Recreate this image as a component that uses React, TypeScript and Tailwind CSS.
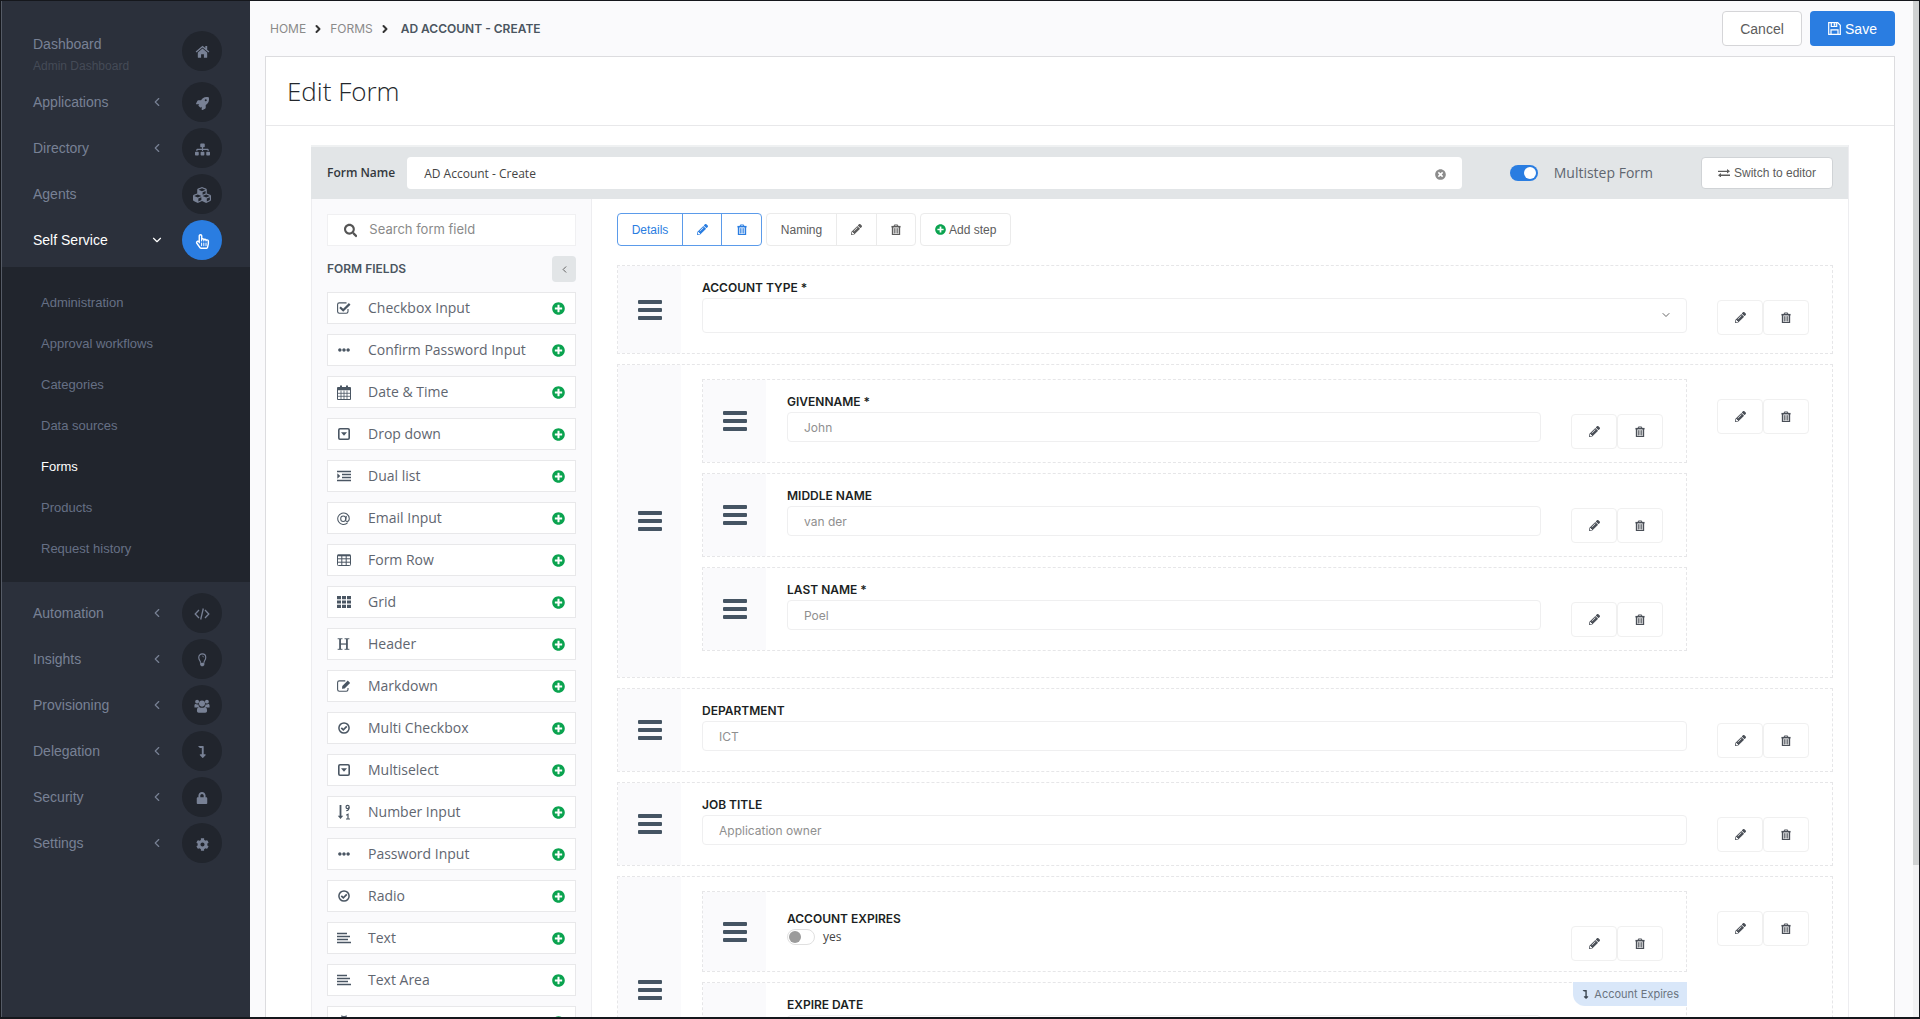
import React from "react";
import { ChevronDown, ChevronLeft, ChevronRight } from "lucide-react";
import {
  FaCog,
  FaCubes,
  FaEllipsisH,
  FaLevelDownAlt,
  FaLock,
  FaPencilAlt,
  FaPlusCircle,
  FaRegHandPointer,
  FaRocket,
  FaSearch,
  FaSitemap,
  FaTimesCircle,
} from "react-icons/fa";

type IconProps = { className?: string };

const HomeIcon = ({ className }: IconProps) => (
  <svg viewBox="0 0 16 14" className={className} fill="currentColor">
    <path d="M8 3.700 3 8v5c0 .4.300.7.700.7H6.500V9.800h3v3.900h2.800c.4 0 .7-.3.7-.7V8z" />
    <path d="M8 .8.700 7l.9 1L8 2.600 14.400 8l.9-1-2.300-2V1h-2v2.300z" />
  </svg>
);

const TrashIcon = ({ className }: IconProps) => (
  <svg viewBox="0 0 12 14" className={className} fill="none" stroke="currentColor">
    <path d="M.5 3.200h11" strokeWidth="1.800" />
    <path d="M4 3V1.200h4V3" strokeWidth="1.200" />
    <path d="M1.900 3.500v9.300h8.200V3.500" strokeWidth="1.800" />
    <path d="M4.300 5v6.500M6 5v6.500M7.700 5v6.500" strokeWidth="1" />
  </svg>
);

const CodeIcon = ({ className }: IconProps) => (
  <svg viewBox="0 0 16 14" className={className} fill="none" stroke="currentColor" strokeWidth="1.300">
    <path d="M5 3 1.200 7 5 11M11 3l3.800 4-3.800 4M9.300 1.500 6.700 12.500" />
  </svg>
);

const BulbIcon = ({ className }: IconProps) => (
  <svg viewBox="0 0 12 16" className={className} fill="none" stroke="currentColor" strokeWidth="1.300">
    <path d="M4 11C4 9 2 8 2 5a4 4 0 0 1 8 0c0 3-2 4-2 6" />
    <path d="M6 3.500c1 0 1.700.5 1.700 1.500" strokeWidth="0.800" />
    <path d="M3.600 11.200h4.800v2.500L7 15.200H5l-1.400-1.500z" fill="currentColor" stroke="none" />
  </svg>
);

const GroupIcon = ({ className }: IconProps) => (
  <svg viewBox="0 0 18 16" className={className} fill="currentColor">
    <circle cx="3.500" cy="3" r="2.200" />
    <circle cx="14.500" cy="3" r="2.200" />
    <circle cx="9" cy="5.200" r="3.400" />
    <path d="M.5 9.500V7.300c0-1 .6-1.600 1.400-1.600.8.500 2 .6 3 .2.100 1.300.6 2.100 1.200 2.800-1.200 0-2 .3-2.600.8zM17.500 9.500V7.300c0-1-.6-1.600-1.400-1.600-.8.500-2 .6-3 .2-.1 1.300-.6 2.100-1.200 2.800 1.200 0 2 .3 2.600.8z" />
    <path d="M3.300 13.300c0-2.700.8-4.400 2.500-4.400 2 1.300 4.400 1.300 6.400 0 1.700 0 2.500 1.700 2.500 4.400 0 1.500-.8 2.200-2 2.200H5.300c-1.200 0-2-.7-2-2.200z" />
  </svg>
);

const CheckSquareIcon = ({ className }: IconProps) => (
  <svg viewBox="0 0 14 12" className={className} fill="none" stroke="currentColor">
    <path d="M11 7v2.600c0 1-.7 1.700-1.700 1.700h-7c-1 0-1.700-.7-1.700-1.700v-7c0-1 .7-1.700 1.700-1.700h7.200" strokeWidth="1.100" />
    <path d="M3 5.200 6.200 8.200 12.700 1.900" strokeWidth="2.200" />
  </svg>
);

const EditIcon = ({ className }: IconProps) => (
  <svg viewBox="0 0 14 12" className={className} fill="none" stroke="currentColor">
    <path d="M11 8v1.600c0 1-.7 1.700-1.700 1.700h-7c-1 0-1.700-.7-1.700-1.700v-7c0-1 .7-1.700 1.700-1.700h6" strokeWidth="1.100" />
    <path d="m5 8.700.3-2.600L10.800.6l2.300 2.300-5.500 5.500z" fill="currentColor" stroke="none" />
  </svg>
);

const CalendarIcon = ({ className }: IconProps) => (
  <svg viewBox="0 0 14 15" className={className} fill="none" stroke="currentColor">
    <path d="M.5 2.500h13v12H.5z" />
    <path d="M.5 4h13" strokeWidth="2.500" />
    <path d="M4 .5v3M10 .5v3" strokeWidth="2" />
    <path d="M4 5.500v9M7 5.500v9M10 5.500v9M.5 8.300h13M.5 11.300h13" strokeWidth="0.800" />
  </svg>
);

const CaretSquareIcon = ({ className }: IconProps) => (
  <svg viewBox="0 0 12 12" className={className} fill="none" stroke="currentColor" strokeWidth="1.600">
    <rect x=".8" y=".8" width="10.400" height="10.400" rx="1.200" />
    <path d="M3 4.200h6L6 7.800z" fill="currentColor" stroke="none" />
  </svg>
);

const IndentIcon = ({ className }: IconProps) => (
  <svg viewBox="0 0 14 12" className={className} fill="none" stroke="currentColor" strokeWidth="1.700">
    <path d="M0 1.500h14M5 4.500h9M5 7.500h9M0 10.500h14" />
    <path d="M.3 3.300 3.300 6l-3 2.700z" fill="currentColor" stroke="none" />
  </svg>
);

const AlignLeftIcon = ({ className }: IconProps) => (
  <svg viewBox="0 0 14 12" className={className} fill="none" stroke="currentColor" strokeWidth="1.700">
    <path d="M0 1.500h10M0 4.500h13M0 7.500h11M0 10.500h14" />
  </svg>
);

const AtIcon = ({ className }: IconProps) => (
  <svg viewBox="0 0 14 14" className={className} fill="none" stroke="currentColor" strokeWidth="1.100">
    <path d="M11.500 11.500A6.200 6.200 0 1 1 13.200 7c0 2-1 3.200-2.300 3.200-1.200 0-1.700-.8-1.400-2.200l.6-3.800" />
    <ellipse cx="6.700" cy="7.200" rx="2.700" ry="3" />
  </svg>
);

const TableIcon = ({ className }: IconProps) => (
  <svg viewBox="0 0 14 12" className={className} fill="none" stroke="currentColor">
    <rect x=".5" y="1" width="13" height="10.500" rx=".8" />
    <path d="M.5 1.400h13" strokeWidth="1.800" />
    <path d="M4.800 1v10.500M9.200 1v10.500M.5 4.800h13M.5 8.200h13" />
  </svg>
);

const GridIcon = ({ className }: IconProps) => (
  <svg viewBox="0 0 14 12" className={className} fill="currentColor">
    <path d="M0 0h4v3.200H0zM5 0h4v3.200H5zM10 0h4v3.200h-4zM0 4.400h4v3.200H0zM5 4.400h4v3.200H5zM10 4.400h4v3.200h-4zM0 8.800h4V12H0zM5 8.800h4V12H5zM10 8.800h4V12h-4z" />
  </svg>
);

const HeaderIcon = ({ className }: IconProps) => (
  <svg viewBox="0 0 14 13" className={className} fill="none" stroke="currentColor">
    <path d="M3.300 1v11M10.700 1v11" strokeWidth="1.900" />
    <path d="M3 6.500h8" strokeWidth="1.300" />
    <path d="M.7.800h5.200M8.100.800h5.200M.7 12.200h5.200M8.100 12.200h5.200" />
  </svg>
);

const CheckCircleIcon = ({ className }: IconProps) => (
  <svg viewBox="0 0 12 12" className={className} fill="none" stroke="currentColor">
    <circle cx="6" cy="6" r="5.100" strokeWidth="1.500" />
    <path d="m3.300 5.900 2 2 3.500-3.500" strokeWidth="1.700" />
  </svg>
);

const SortNumericIcon = ({ className }: IconProps) => (
  <svg viewBox="0 0 14 16" className={className} fill="none" stroke="currentColor">
    <path d="M3.500 1v12" strokeWidth="1.800" />
    <path d="M.8 11.800h5.400L3.500 15z" fill="currentColor" stroke="none" />
    <path d="M12 3.300c0 2-.7 3.400-2.700 3.400M9 15h4M9.200 11.200l1.800-1V15" strokeWidth="1.200" />
    <circle cx="10.600" cy="3" r="1.600" strokeWidth="1.200" />
  </svg>
);

const TextCursorIcon = ({ className }: IconProps) => (
  <svg viewBox="0 0 14 14" className={className} fill="none" stroke="currentColor" strokeWidth="1.200">
    <path d="M4 1c2 0 3 .5 3 2 0-1.500 1-2 3-2M7 3v8M4 13c2 0 3-.5 3-2 0 1.500 1 2 3 2M5 7h4" />
  </svg>
);

const FloppyIcon = ({ className }: IconProps) => (
  <svg viewBox="0 0 13 13" className={className} fill="none" stroke="currentColor" strokeWidth="1.200">
    <path d="M.7.700h9l2.600 2.600v9H.7z" />
    <path d="M3.300.7v3.800h5.400V.7M3 12V7.800h7V12" />
    <path d="M6.500 1.200v2.600" strokeWidth="1.600" />
  </svg>
);

const ExchangeIcon = ({ className }: IconProps) => (
  <svg viewBox="0 0 14 10" className={className} fill="none" stroke="currentColor" strokeWidth="1.500">
    <path d="M0 2.700h11M3 7.300h11" />
    <path d="M10.500 0 14 2.700l-3.500 2.500zM3.500 4.800 0 7.300 3.500 10z" fill="currentColor" stroke="none" />
  </svg>
);

const BarsIcon = ({ className }: IconProps) => (
  <svg viewBox="0 0 24 20" className={className} fill="currentColor">
    <rect width="24" height="4" rx="1" />
    <rect y="8" width="24" height="4" rx="1" />
    <rect y="16" width="24" height="4" rx="1" />
  </svg>
);

type MenuEntry = {
  label: string;
  icon: React.ReactNode;
  sub?: string;
  arrow?: boolean;
  active?: boolean;
};

const topMenu: MenuEntry[] = [
  { label: "Dashboard", sub: "Admin Dashboard", icon: <HomeIcon className="w-[15px]" /> },
  { label: "Applications", arrow: true, icon: <FaRocket className="size-[13px]" /> },
  { label: "Directory", arrow: true, icon: <FaSitemap className="size-[15px]" /> },
  { label: "Agents", icon: <FaCubes className="size-[18px]" /> },
  { label: "Self Service", arrow: true, active: true, icon: <FaRegHandPointer className="size-[15px]" /> },
];

const bottomMenu: MenuEntry[] = [
  { label: "Automation", arrow: true, icon: <CodeIcon className="w-4" /> },
  { label: "Insights", arrow: true, icon: <BulbIcon className="h-[14px]" /> },
  { label: "Provisioning", arrow: true, icon: <GroupIcon className="w-4" /> },
  { label: "Delegation", arrow: true, icon: <FaLevelDownAlt className="size-3" /> },
  { label: "Security", arrow: true, icon: <FaLock className="size-3" /> },
  { label: "Settings", arrow: true, icon: <FaCog className="size-[13px]" /> },
];

const subMenu = [
  "Administration",
  "Approval workflows",
  "Categories",
  "Data sources",
  "Forms",
  "Products",
  "Request history",
];

const formFields = [
  { label: "Checkbox Input", icon: <CheckSquareIcon className="w-[14px]" /> },
  { label: "Confirm Password Input", icon: <FaEllipsisH className="size-3" /> },
  { label: "Date & Time", icon: <CalendarIcon className="w-[14px]" /> },
  { label: "Drop down", icon: <CaretSquareIcon className="w-3" /> },
  { label: "Dual list", icon: <IndentIcon className="w-[14px]" /> },
  { label: "Email Input", icon: <AtIcon className="w-[13px]" /> },
  { label: "Form Row", icon: <TableIcon className="w-[14px]" /> },
  { label: "Grid", icon: <GridIcon className="w-[14px]" /> },
  { label: "Header", icon: <HeaderIcon className="w-[13px]" /> },
  { label: "Markdown", icon: <EditIcon className="w-[14px]" /> },
  { label: "Multi Checkbox", icon: <CheckCircleIcon className="w-3" /> },
  { label: "Multiselect", icon: <CaretSquareIcon className="w-3" /> },
  { label: "Number Input", icon: <SortNumericIcon className="w-[14px]" /> },
  { label: "Password Input", icon: <FaEllipsisH className="size-3" /> },
  { label: "Radio", icon: <CheckCircleIcon className="w-3" /> },
  { label: "Text", icon: <AlignLeftIcon className="w-[14px]" /> },
  { label: "Text Area", icon: <AlignLeftIcon className="w-[14px]" /> },
  { label: "Text Input", icon: <TextCursorIcon className="w-[14px]" /> },
];

const MenuItem = ({ label, icon, sub, arrow, active }: MenuEntry) => (
  <li>
    <a
      href="#"
      className={`flex items-center pl-[31px] pr-7 ${sub ? "h-14" : "h-[46px]"} ${
        active ? "text-white" : "text-[#788195]"
      }`}
    >
      <span className={`flex-1 text-sm leading-5 ${sub ? "pt-[9px]" : ""}`}>
        {label}
        {sub && <span className="block text-xs leading-6 text-[#454b57]">{sub}</span>}
      </span>
      {arrow && (active ? <ChevronDown className="mr-[18px] size-[14px]" /> : <ChevronLeft className="mr-[18px] size-[14px]" />)}
      <span
        className={`flex size-10 items-center justify-center rounded-full pt-0.5 ${
          active ? "bg-[#2a7de1]" : "bg-[#21252d]"
        }`}
      >
        {icon}
      </span>
    </a>
  </li>
);

const Sidebar = () => (
  <nav className="w-[249px] shrink-0 border-l border-[#555b66] bg-[#2b303b] font-['Liberation_Sans',Arial,sans-serif]">
    <ul className="pt-[22px]">
      {topMenu.map((item) => (
        <MenuItem key={item.label} {...item} />
      ))}
    </ul>
    <ul className="mt-1 bg-[#21252d] pb-[13px] pt-[15px]">
      {subMenu.map((label) => (
        <li key={label}>
          <a
            href="#"
            className={`block pl-[39px] text-[13px] leading-[41px] ${
              label === "Forms" ? "text-white" : "text-[#667085]"
            }`}
          >
            {label}
          </a>
        </li>
      ))}
    </ul>
    <ul className="pt-2">
      {bottomMenu.map((item) => (
        <MenuItem key={item.label} {...item} />
      ))}
    </ul>
  </nav>
);

const RowActions = () => (
  <div className="flex text-[#4a4f57]">
    <button aria-label="Edit" className="flex h-[35px] w-[46px] items-center justify-center rounded-sm border border-[#f0f0f0] bg-white">
      <FaPencilAlt className="size-[11px]" />
    </button>
    <button aria-label="Delete" className="flex h-[35px] w-[46px] items-center justify-center rounded-sm border border-[#f0f0f0] bg-white">
      <TrashIcon className="w-[10px]" />
    </button>
  </div>
);

type RowProps = {
  children: React.ReactNode;
  className?: string;
  badge?: string;
};

const Row = ({ children, className = "pt-[14px] pb-5", badge }: RowProps) => (
  <div className="relative flex border border-dashed border-[#e6e6e8]">
    <div className="flex w-[63px] shrink-0 items-center justify-center bg-[#fafafc] text-[#455463]">
      <BarsIcon className="w-6" />
    </div>
    <div className={`ml-[21px] min-w-0 flex-1 ${className}`}>{children}</div>
    <div className="ml-[30px] mr-[23px] shrink-0 pt-[34px]">
      <RowActions />
    </div>
    {badge && (
      <span className="absolute -right-px -top-px flex h-6 items-center gap-1 rounded-bl-xl bg-[#d9e7f9] px-2 font-['Inter',sans-serif] text-[11px] text-[#6b7480]">
        <FaLevelDownAlt className="size-[9px] text-[#3c4651]" />
        {badge}
      </span>
    )}
  </div>
);

const labelClass =
  "block font-['Inter',sans-serif] text-xs leading-4 font-semibold text-[#1c1f23] mb-0.5";

const TextField = ({ id, label, placeholder }: { id: string; label: string; placeholder?: string }) => (
  <>
    <label htmlFor={id} className={labelClass}>
      {label}
    </label>
    <input
      id={id}
      placeholder={placeholder}
      className="block h-[30px] w-full rounded-sm border border-[#efeff0] px-4 font-['Inter',sans-serif] text-xs placeholder:text-[#8f8f8f]"
    />
  </>
);

const FieldPalette = () => (
  <aside className="w-[281px] shrink-0 border-x border-[#ededf0] bg-[#fafafc] px-[15px] pt-[15px]">
    <div className="flex h-8 items-center border border-[#f0f0f2] bg-white pl-4">
      <FaSearch className="size-[15px] text-[#555]" />
      <input
        aria-label="Search form field"
        placeholder="Search form field"
        className="ml-3 w-full font-['Inter',sans-serif] text-[13px] placeholder:text-[#8a8a8a]"
      />
    </div>
    <div className="mt-2.5 flex items-center justify-between">
      <h2 className="font-['Inter',sans-serif] text-xs font-semibold text-[#4a5560]">FORM FIELDS</h2>
      <button aria-label="Collapse" className="flex h-[26px] w-6 items-center justify-center rounded-sm bg-[#e2e5e7] text-[#555]">
        <ChevronLeft className="size-[11px]" />
      </button>
    </div>
    <ul className="mt-2.5 flex flex-col gap-2.5">
      {formFields.map(({ label, icon }) => (
        <li key={label} className="flex h-8 items-center border border-[#e8e8ea] bg-white pl-2 pr-2.5">
          <span className="flex w-[15px] justify-center text-[#4a5663]">{icon}</span>
          <span className="ml-[17px] flex-1 font-['Open_Sans',sans-serif] text-sm text-[#5f6670]">{label}</span>
          <button aria-label={`Add ${label}`} className="text-[#0aa34f]">
            <FaPlusCircle className="size-[13px]" />
          </button>
        </li>
      ))}
    </ul>
  </aside>
);

const Steps = () => (
  <div className="flex gap-1 font-['Liberation_Sans',Arial,sans-serif] text-xs">
    <div className="flex h-[33px] divide-x divide-[#5b9bea] rounded-sm border border-[#5b9bea] text-[#2a7de1]">
      <button className="w-[65px]">Details</button>
      <button aria-label="Edit Details" className="flex w-[39px] items-center justify-center">
        <FaPencilAlt className="size-[11px]" />
      </button>
      <button aria-label="Delete Details" className="flex w-[39px] items-center justify-center">
        <TrashIcon className="w-[10px]" />
      </button>
    </div>
    <div className="flex h-[33px] divide-x divide-[#ebebeb] rounded-sm border border-[#ebebeb] text-[#5c5c5c]">
      <button className="w-[70px]">Naming</button>
      <button aria-label="Edit Naming" className="flex w-10 items-center justify-center">
        <FaPencilAlt className="size-[11px]" />
      </button>
      <button aria-label="Delete Naming" className="flex w-[38px] items-center justify-center">
        <TrashIcon className="w-[10px]" />
      </button>
    </div>
    <button className="flex h-[33px] items-center gap-[3px] rounded-sm border border-[#ebebeb] px-[14px] text-[#5c5c5c]">
      <FaPlusCircle className="size-[11px] text-[#0aa34f]" />
      Add step
    </button>
  </div>
);

const FormCanvas = () => (
  <section className="min-w-0 flex-1 pl-[25px] pr-[15px] pt-[14px]">
    <Steps />
    <div className="mt-[19px] flex flex-col gap-2.5">
      <Row>
        <label htmlFor="account-type" className={labelClass}>
          ACCOUNT TYPE *
        </label>
        <div className="relative">
          <select id="account-type" className="block h-[35px] w-full appearance-none rounded border border-[#efeff0] px-4 text-xs">
            <option value=""></option>
          </select>
          <ChevronDown className="pointer-events-none absolute right-[15px] top-[11px] size-3 text-[#666]" />
        </div>
      </Row>

      <Row className="flex flex-col gap-2.5 pt-[14px] pb-[26px]">
        <Row>
          <TextField id="givenname" label="GIVENNAME *" placeholder="John" />
        </Row>
        <Row>
          <TextField id="middlename" label="MIDDLE NAME" placeholder="van der" />
        </Row>
        <Row>
          <TextField id="lastname" label="LAST NAME *" placeholder="Poel" />
        </Row>
      </Row>

      <Row>
        <TextField id="department" label="DEPARTMENT" placeholder="ICT" />
      </Row>
      <Row>
        <TextField id="jobtitle" label="JOB TITLE" placeholder="Application owner" />
      </Row>

      <Row className="flex flex-col gap-2.5 pt-[14px] pb-[26px]">
        <Row className="pt-[19px] pb-[26px]">
          <span className={labelClass}>ACCOUNT EXPIRES</span>
          <label className="flex items-center gap-2 font-['Open_Sans',sans-serif] text-xs text-[#444]">
            <input
              type="checkbox"
              role="switch"
              className="h-4 w-7 appearance-none rounded-full border border-[#e0e0e0] bg-white p-px before:block before:size-3 before:rounded-full before:bg-[#9b9b9b]"
            />
            yes
          </label>
        </Row>
        <Row className="pt-[14px] pb-[30px]" badge="Account Expires">
          <TextField id="expiredate" label="EXPIRE DATE" />
        </Row>
      </Row>
    </div>
  </section>
);

const App: React.FC = () => {
  return (
    <div className="flex h-screen overflow-hidden border border-b-2 border-[#15171c] bg-[#fafafc]">
      <Sidebar />

      <main className="flex min-w-0 flex-1 flex-col">
        {/* Top bar */}
        <header className="flex h-[55px] shrink-0 items-center justify-between pb-2.5 pl-5 pr-[18px] pt-2.5">
          <nav className="flex items-center gap-1.5 font-['Inter',sans-serif] text-xs text-[#8a8a8a]">
            <a href="#">HOME</a>
            <ChevronRight className="size-3 text-[#333]" strokeWidth={4} />
            <a href="#">FORMS</a>
            <ChevronRight className="size-3 text-[#333]" strokeWidth={4} />
            <span className="ml-1 font-semibold text-[#4a5560]">AD ACCOUNT - CREATE</span>
          </nav>
          <div className="flex gap-2 font-['Liberation_Sans',Arial,sans-serif] text-sm">
            <button className="h-[35px] w-20 rounded-sm border border-[#d5d5d8] bg-white text-[#5c5c5c]">Cancel</button>
            <button className="flex h-[35px] w-[85px] items-center justify-center gap-1 rounded-sm bg-[#2a7de1] text-white">
              <FloppyIcon className="w-[13px]" />
              Save
            </button>
          </div>
        </header>

        {/* Card */}
        <div className="ml-[15px] mr-[18px] min-h-0 flex-1 border border-b-0 border-[#dcdcdf] bg-white">
          <h1 className="flex h-[69px] items-center border-b border-[#e8e8ea] pb-1 pl-[21px] pt-1 font-['Open_Sans',sans-serif] text-[26px] font-light text-[#23272c]">
            Edit Form
          </h1>

          <div className="ml-[45px] mr-[45px] mt-[19px] border-r border-[#ededf0]">
            {/* Form settings */}
            <div className="flex h-[54px] items-center border-t-2 border-[#eff1f2] bg-[#e2e5e7] pl-4 pr-[15px] font-['Open_Sans',sans-serif]">
              <label htmlFor="form-name" className="text-xs font-semibold text-[#33383d]">
                Form Name
              </label>
              <div className="relative ml-3 flex-1">
                <input
                  id="form-name"
                  defaultValue="AD Account - Create"
                  className="h-8 w-full rounded-sm bg-white px-[17px] text-xs text-[#444]"
                />
                <button aria-label="Clear" className="absolute right-4 top-3 text-[#8c8c8c]">
                  <FaTimesCircle className="size-[11px]" />
                </button>
              </div>
              <label className="ml-12 flex items-center gap-4 text-sm text-[#5f6670]">
                <input
                  type="checkbox"
                  role="switch"
                  defaultChecked
                  className="h-4 w-7 appearance-none rounded-full bg-[#2a7de1] p-0.5 before:ml-auto before:block before:size-3 before:rounded-full before:bg-white"
                />
                Multistep Form
              </label>
              <button className="ml-12 flex h-8 w-[132px] items-center justify-center gap-1 rounded-sm border border-[#d0d3d6] bg-white font-['Liberation_Sans',Arial,sans-serif] text-xs text-[#5c5c5c]">
                <ExchangeIcon className="w-3" />
                Switch to editor
              </button>
            </div>

            <div className="flex">
              <FieldPalette />
              <FormCanvas />
            </div>
          </div>
        </div>
      </main>

      {/* Scroll track */}
      <div className="w-1.5 shrink-0 bg-[#f1f1f3]">
        <div className="h-[85%] bg-[#cfd1d2]" />
      </div>
    </div>
  );
};

export default App;
